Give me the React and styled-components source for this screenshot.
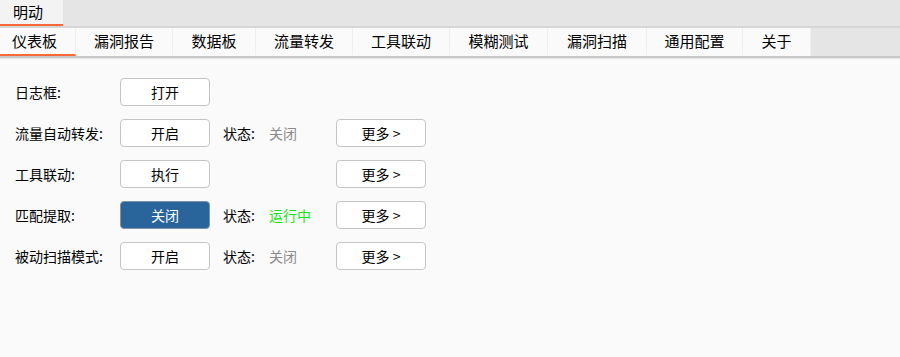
import React from 'react';
import styled, { createGlobalStyle } from 'styled-components';

const GlobalStyle = createGlobalStyle`
    body {
        margin: 0;
        background: #fafafa;
        font-family: "Noto Sans CJK SC", "Noto Sans", sans-serif;
        color: #000;
    }
`;

const TopBar = styled.div`
    display: flex;
    height: 26px;
    background: #e5e5e5;
    border-bottom: 2px solid #d6d6d6;
`;

const TopTab = styled.div`
    width: 63px;
    box-sizing: border-box;
    background: #f3f3f3;
    border-bottom: 2px solid #f8693a;
    font-size: 15px;
    line-height: 24px;
    padding-left: 13px;
`;

const TabBar = styled.div`
    display: flex;
    height: 28px;
    background: #e5e5e5;
    border-bottom: 2px solid #c8c8c8;
`;

const Tab = styled.div`
    width: ${p => p.w}px;
    box-sizing: border-box;
    background: #fafafa;
    border-right: 1px solid #efefef;
    border-bottom: 2px solid ${p => (p.active ? '#f8693a' : '#fafafa')};
    font-size: 15px;
    line-height: 26px;
    text-align: center;
    padding-right: ${p => (p.active ? 6 : 0)}px;
`;

const Content = styled.div`
    border-top: 1px solid #e6e6e6;
    padding: 19px 0 0 15px;
    display: flex;
    flex-direction: column;
    gap: 13px;
`;

const Row = styled.div`
    display: grid;
    grid-template-columns: 105px 90px 59px 67px 90px;
    height: 28px;
    align-items: center;
    font-size: 14px;
`;

const Label = styled.span`
    line-height: 28px;
`;

const Button = styled.div`
    height: 28px;
    box-sizing: border-box;
    border: 1px solid ${p => (p.primary ? '#7f93a8' : '#c4c4c4')};
    border-radius: 4px;
    background: ${p => (p.primary ? '#29659b' : '#ffffff')};
    color: ${p => (p.primary ? '#ffffff' : '#000')};
    font-size: 14px;
    line-height: 26px;
    text-align: center;
    white-space: pre;
    grid-column: ${p => p.col || 'auto'};
`;

const StatusKey = styled.span`
    padding-left: 13px;
`;

const StatusValue = styled.span`
    color: ${p => (p.on ? '#14e814' : '#8a8a8a')};
`;

const tabs = [
    ['仪表板', 76],
    ['漏洞报告', 97],
    ['数据板', 83],
    ['流量转发', 97],
    ['工具联动', 97],
    ['模糊测试', 98],
    ['漏洞扫描', 99],
    ['通用配置', 96],
    ['关于', 68],
];

const rows = [
    { label: '日志框:', btn: '打开' },
    { label: '流量自动转发:', btn: '开启', status: '关闭', more: true },
    { label: '工具联动:', btn: '执行', more: true },
    { label: '匹配提取:', btn: '关闭', primary: true, status: '运行中', on: true, more: true },
    { label: '被动扫描模式:', btn: '开启', status: '关闭', more: true },
];

const App = () => {
    return (
        <>
            <GlobalStyle />
            <TopBar>
                <TopTab>明动</TopTab>
            </TopBar>
            <TabBar>
                {tabs.map(([t, w], i) => (
                    <Tab key={t} w={w} active={i === 0}>{t}</Tab>
                ))}
            </TabBar>
            <Content>
                {rows.map(r => (
                    <Row key={r.label}>
                        <Label>{r.label}</Label>
                        <Button primary={r.primary}>{r.btn}</Button>
                        {r.status ? <StatusKey>状态:</StatusKey> : <span />}
                        {r.status ? <StatusValue on={r.on}>{r.status}</StatusValue> : <span />}
                        {r.more && <Button col={5}>{'更多 >'}</Button>}
                    </Row>
                ))}
            </Content>
        </>
    );
};

export default App;
